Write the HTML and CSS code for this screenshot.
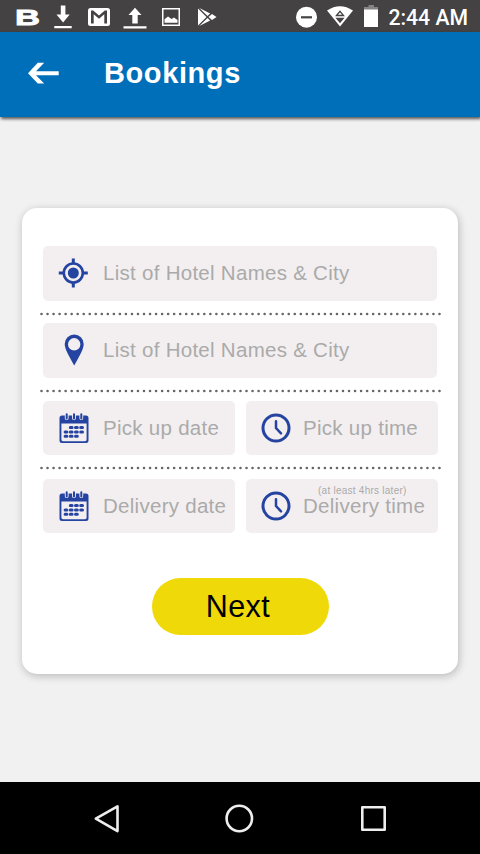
FILE: index.html
```html
<!DOCTYPE html>
<html lang="en">
<head>
<meta charset="utf-8">
<title>Bookings</title>
<link rel="stylesheet" href="styles.css">
</head>
<body>
<div class="screen">
  <div class="status">
    <div class="status-left">
      <svg width="24" height="24" viewBox="0 0 24 24"><text class="brand" x="-1" y="20.5" textLength="25" lengthAdjust="spacingAndGlyphs">B</text></svg>
      <svg width="18" height="24" viewBox="0 0 18 24"><path d="M6.800 1.500h4.600v9h4.300L9.100 18.500 2.500 10.500h4.300zM.3 22h17.400v2.200H.3z"/></svg>
      <svg width="22" height="24" viewBox="0 0 22 24"><rect x="0" y="4" width="22" height="18" rx="2.500"/><path class="cut" d="M3 19.500v-13h2.200L11 11.500l5.800-5h2.200v13h-2.700V10.200L11 14.800 5.700 10.200v9.300z"/></svg>
      <svg width="24" height="24" viewBox="0 0 24 24"><path d="M9.300 19.500v-8.500H5.500L12 3.800l6.500 7.200h-3.800v8.500zM.5 22.300h23v2.200H.5z"/></svg>
      <svg width="18" height="24" viewBox="0 0 18 24"><rect x=".75" y="4.750" width="16.500" height="16.500" class="line thin"/><path d="M2.500 18.800v-3.500l3.500-2.800 3.500 2.500 2.500-1.500 3.500 2.500v2.800z"/></svg>
      <svg width="20" height="24" viewBox="0 0 20 24"><path d="M1 4.500v17L9.500 12.900zM2.300 4l8.200 7.900 2.700-2.400zM2.300 22l8.200-8 2.700 2.400zM11.500 12.900l3.500-3 4.500 3-4.500 3z"/></svg>
    </div>
    <div class="status-right">
      <svg width="22" height="24" viewBox="0 0 22 24"><circle cx="10.500" cy="13.200" r="10.500"/><path class="cut" d="M5 12.200h11v2.200H5z"/></svg>
      <svg width="26" height="24" viewBox="0 0 26 24"><path d="M0 5.500Q13-3 26 5.500L13 21.500z"/><path class="cutline" d="M9.500 10.500 13 6.300l3.500 4.200z"/><path class="cut" d="M8.500 12.800h9L13 18.300z"/></svg>
      <svg width="14" height="24" viewBox="0 0 14 24"><path class="dim" d="M4.500 0h5.500v2H14v3H0V2h4.500z"/><path d="M0 4.500h14V22H0z"/></svg>
      <span class="clock">2:44 AM</span>
    </div>
  </div>
  <header class="appbar">
    <svg width="32" height="22" viewBox="0 0 32 22"><path class="back" d="M1 11.200 10.800.8H17.200L9 9.300H31.700v3.900H9L17.200 21.400H10.800z"/></svg>
    <h1>Bookings</h1>
  </header>
  <main>
    <section class="card">
      <div class="field">
        <svg class="icon" width="30" height="30" viewBox="0 0 30 30"><circle cx="15.300" cy="15" r="9.500" class="ring thinner"/><circle cx="15.300" cy="15" r="5.500"/><path d="M13.800.5h3V6h-3zM13.800 24h3v5.500h-3zM.8 13.500h5.500v3H.8zM24.300 13.500h5.500v3h-5.500z"/></svg>
        <span>List of Hotel Names &amp; City</span>
      </div>
      <svg class="dots" width="403" height="4"><path d="M1.500 2H402"/></svg>
      <div class="field">
        <svg class="icon" width="30" height="32" viewBox="0 0 30 32"><path fill-rule="evenodd" d="M16.200.5a9.500 9.500 0 0 0-9.500 9.500c0 5 4.500 12.500 9.500 21.500 5-9 9.500-16.500 9.500-21.500a9.500 9.500 0 0 0-9.500-9.500zm0 3.600a6.200 6.200 0 1 1 0 12.400 6.200 6.200 0 0 1 0-12.400z"/></svg>
        <span>List of Hotel Names &amp; City</span>
      </div>
      <svg class="dots" width="403" height="4"><path d="M1.500 2H402"/></svg>
      <div class="pair">
        <div class="field date">
          <svg class="icon" width="30" height="32" viewBox="0 0 30 32"><use href="#calendar" width="30" height="32"/></svg>
          <span>Pick up date</span>
        </div>
        <div class="field time">
          <svg class="icon" width="30" height="30" viewBox="0 0 30 30"><use href="#time" width="30" height="30"/></svg>
          <span>Pick up time</span>
        </div>
      </div>
      <svg class="dots third" width="403" height="4"><path d="M1.500 2H402"/></svg>
      <div class="pair">
        <div class="field date">
          <svg class="icon" width="30" height="32" viewBox="0 0 30 32"><use href="#calendar" width="30" height="32"/></svg>
          <span>Delivery date</span>
        </div>
        <div class="field time">
          <svg class="icon" width="30" height="30" viewBox="0 0 30 30"><use href="#time" width="30" height="30"/></svg>
          <span>Delivery time</span>
          <small>(at least 4hrs later)</small>
        </div>
      </div>
      <button class="next">Next</button>
    </section>
  </main>
  <nav class="nav">
    <svg width="28" height="32" viewBox="0 0 28 32"><path class="key" d="M24.500 3.300v24.800L2.800 15.700z"/></svg>
    <svg width="30" height="32" viewBox="0 0 30 32"><circle class="key" cx="15.300" cy="15.500" r="12.700"/></svg>
    <svg width="28" height="32" viewBox="0 0 28 32"><rect class="key" x="3.300" y="4.300" width="22.400" height="22.400"/></svg>
  </nav>
</div>
<svg class="defs" width="0" height="0">
  <symbol id="calendar" viewBox="0 0 30 32">
    <path fill-rule="evenodd" d="M3 3.500h24A2.500 2.500 0 0 1 29.500 6v22.500A2.500 2.500 0 0 1 27 31H3a2.500 2.500 0 0 1-2.500-2.500V6A2.500 2.500 0 0 1 3 3.500zM2.400 11.500v16q0 1.700 1.600 1.700h22q1.600 0 1.600-1.700v-16z"/>
    <path class="gap" d="M7.700 2.500v3.700M15 2.500v3.700M22.300 2.500v3.700"/>
    <path class="loop" d="M7.700 2.200v4.300M15 2.200v4.300M22.300 2.200v4.300"/>
    <path class="days" d="M11.300 15.500h1.800M16.500 15.500h1.800M21.700 15.500h1.800M6.100 19.900h1.800M11.300 19.900h1.800M16.500 19.900h1.800M21.700 19.900h1.800M6.100 24.300h1.800M11.300 24.300h1.800M16.500 24.300h1.800"/>
  </symbol>
  <symbol id="time" viewBox="0 0 30 30">
    <circle class="ring" cx="15" cy="15" r="13"/>
    <path class="hands" d="M15 8.300V15l5 5.300"/>
  </symbol>
</svg>
</body>
</html>
```
FILE: styles.css
```css
* { box-sizing: border-box; }
body { margin: 0; font-family: "Liberation Sans", Arial, sans-serif; }
svg { display: block; flex: none; }
.defs { position: absolute; }
.screen { width: 480px; height: 854px; display: flex; flex-direction: column; background: #f1f1f1; overflow: hidden; }

.status { height: 32px; flex: none; display: flex; justify-content: space-between; padding: 4px 12px 0 16px; background: #444242; fill: #fff; color: #fff; }
.status svg { overflow: visible; }
.status-left { display: flex; }
.status-left svg:nth-child(2) { margin-left: 14px; }
.status-left svg:nth-child(3) { margin-left: 16px; }
.status-left svg:nth-child(4) { margin-left: 13px; }
.status-left svg:nth-child(5) { margin-left: 15px; }
.status-left svg:nth-child(6) { margin-left: 17px; }
.brand { font-size: 22px; font-weight: bold; stroke: #fff; stroke-width: .8; }
.line { fill: none; stroke: #fff; }
.thin { stroke-width: 1.5; }
.cut { fill: #444242; }
.cutline { fill: none; stroke: #444242; stroke-width: 1.3; }
.dim { fill: #858484; }
.status-right { display: flex; }
.status-right svg:nth-child(2) { margin-left: 9px; margin-top: 1px; }
.status-right svg:nth-child(3) { margin-left: 11px; margin-top: 1px; }
.clock { margin-left: 10.500px; font: 500 21.200px/28px Roboto, sans-serif; white-space: nowrap; }

.appbar { height: 85px; flex: none; display: flex; align-items: center; padding: 0 27px 4px; background: #006fba; box-shadow: 1px 2px 3px rgba(0,0,0,.65); }
.back { fill: #fff; }
.appbar h1 { margin: 0 0 0 45px; color: #fff; font-size: 29px; line-height: 36px; letter-spacing: .6px; }

main { flex: 1; padding: 91px 22px 0; }
.card { height: 466px; padding: 38px 21px 0; border-radius: 15px; background: #fff; box-shadow: 1px 2px 8px rgba(0,0,0,.24); display: flex; flex-direction: column; }
.field { position: relative; height: 55px; display: flex; align-items: center; padding: 0 0 1px 15px; border-radius: 5px; background: #f3eff0; color: #aaa; font-size: 20.500px; line-height: 20px; letter-spacing: .28px; white-space: nowrap; }
.field span { margin-left: 15px; }
.field small { position: absolute; left: 72px; top: 7px; font-size: 10px; line-height: 10px; letter-spacing: .25px; }
.icon { fill: #2543a0; }
.ring { fill: none; stroke: #2543a0; stroke-width: 3; }
.thinner { stroke-width: 2.600; }
.hands { fill: none; stroke: #2543a0; stroke-width: 2.500; stroke-linecap: round; }
.gap { stroke: #f3eff0; stroke-width: 3.800; stroke-linecap: round; }
.loop { stroke: #2543a0; stroke-width: 2; stroke-linecap: round; }
.days { stroke: #2543a0; stroke-width: 3; stroke-linecap: round; }
.dots { margin: 10.500px 0 7.500px -3.500px; }
.third { margin: 11px 0 8px -3.500px; }
.dots path { stroke: #666; stroke-width: 2.600; stroke-linecap: round; stroke-dasharray: 0 6.030; }
.pair { display: grid; grid-template-columns: 191.500px 191.500px; gap: 11.500px; padding-top: 1px; }
.pair .field { height: 54px; }
.pair .date { padding-left: 16px; }
.pair .date span { margin-left: 14px; }
.pair .time span { margin-left: 12px; }
.next { width: 177px; height: 57px; margin: 45px 0 0 109px; padding: 0 5px 0 0; border: 0; border-radius: 29px; background: #f0d909; color: #000; font: 30.500px "Liberation Sans", Arial, sans-serif; letter-spacing: .4px; }

.nav { height: 72px; display: flex; align-items: center; padding: 1px 0 0 93px; gap: 105px; background: #000; }
.nav svg:nth-child(2) { margin-left: -2px; }
.key { fill: none; stroke: #eee; stroke-width: 2.600; stroke-linejoin: round; }
```
